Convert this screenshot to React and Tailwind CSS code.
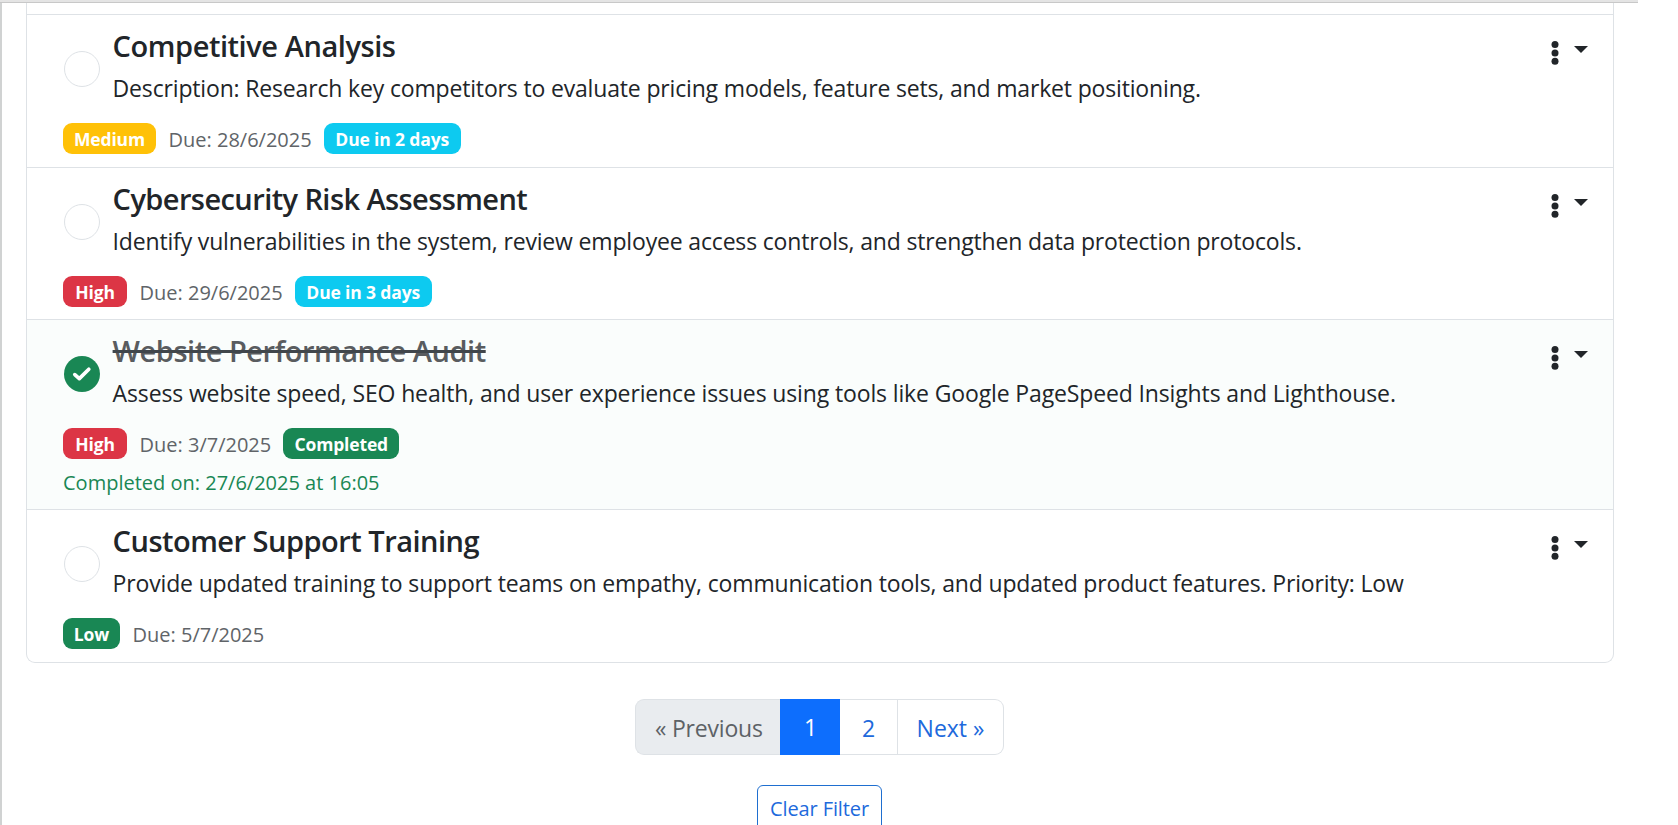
import React from "react";

const tasks = [
  {
    title: "Competitive Analysis",
    titleClass: "tracking-[-0.44px] text-[#212529]",
    description:
      "Description: Research key competitors to evaluate pricing models, feature sets, and market positioning.",
    descriptionClass: "tracking-[-0.165px]",
    rowClass: "h-[153px] border-b",
    priority: "Medium",
    priorityClass: "bg-[#ffc107] w-[93px]",
    due: "Due: 28/6/2025",
    status: "Due in 2 days",
    statusClass: "bg-[#0dcaf0] w-[137px]",
  },
  {
    title: "Cybersecurity Risk Assessment",
    titleClass: "tracking-[-0.58px] text-[#212529]",
    description:
      "Identify vulnerabilities in the system, review employee access controls, and strengthen data protection protocols.",
    descriptionClass: "tracking-[-0.168px]",
    rowClass: "h-[152px] border-b",
    priority: "High",
    priorityClass: "bg-[#dc3545] w-[64px]",
    due: "Due: 29/6/2025",
    status: "Due in 3 days",
    statusClass: "bg-[#0dcaf0] w-[137px]",
  },
  {
    title: "Website Performance Audit",
    titleClass: "tracking-[-0.46px] text-[#595c5f]",
    description:
      "Assess website speed, SEO health, and user experience issues using tools like Google PageSpeed Insights and Lighthouse.",
    descriptionClass: "tracking-[-0.135px]",
    rowClass: "h-[190px] border-b bg-[#fafdfc]",
    priority: "High",
    priorityClass: "bg-[#dc3545] w-[64px]",
    due: "Due: 3/7/2025",
    status: "Completed",
    statusClass: "bg-[#198754] w-[116px]",
    completedOn: "Completed on: 27/6/2025 at 16:05",
    done: true,
  },
  {
    title: "Customer Support Training",
    titleClass: "tracking-[-0.5px] text-[#212529]",
    description:
      "Provide updated training to support teams on empathy, communication tools, and updated product features. Priority: Low",
    descriptionClass: "tracking-[-0.158px]",
    rowClass: "h-[152px]",
    priority: "Low",
    priorityClass: "bg-[#198754] w-[57px]",
    due: "Due: 5/7/2025",
  },
];

function Badge({ className, children }) {
  return (
    <span
      className={`flex h-[31px] shrink-0 items-center justify-center rounded-[9px] pt-[2px] text-[17.5px] leading-[29px] font-bold tracking-[-0.15px] text-white ${className}`}
    >
      {children}
    </span>
  );
}

function Toggle({ done }) {
  if (!done) {
    return <button className="mt-[23px] size-9 shrink-0 rounded-full border border-[#dee2e6] bg-white" />;
  }
  return (
    <button className="mt-[23px] flex size-9 shrink-0 items-center justify-center rounded-full bg-[#198754]">
      <svg width="20" height="16" viewBox="0 0 20 16" fill="none">
        <path
          d="M2.8 8.6 7.3 12.6 16.8 3.3"
          stroke="white"
          strokeWidth="3.7"
          strokeLinecap="round"
          strokeLinejoin="round"
        />
      </svg>
    </button>
  );
}

function Menu() {
  return (
    <button className="mt-[13px] mr-[25px] ml-auto flex shrink-0 items-start gap-[15px]">
      <svg width="8" height="26" viewBox="0 0 8 26" fill="#212529">
        <circle cx="4" cy="3.6" r="3.5" />
        <circle cx="4" cy="12" r="3.5" />
        <circle cx="4" cy="20.3" r="3.5" />
      </svg>
      <svg className="mt-[5px]" width="14" height="7" viewBox="0 0 14 7" fill="#212529">
        <path d="M0 0H14L7 7Z" />
      </svg>
    </button>
  );
}

function TaskRow({ task }) {
  return (
    <li className={`flex flex-col border-[#dee2e6] pt-[13px] pl-9 ${task.rowClass}`}>
      <div className="flex items-start pl-px">
        <Toggle done={task.done} />
        <div className="ml-[12.6px]">
          <h5 className={`text-[29px] leading-[36px] font-semibold whitespace-nowrap ${task.titleClass}`}>
            {task.done ? <s className="decoration-[#40464b] decoration-[3px]">{task.title}</s> : task.title}
          </h5>
          <p className={`mt-[6px] text-[23px] leading-[36px] whitespace-nowrap ${task.descriptionClass}`}>
            {task.description}
          </p>
        </div>
        <Menu />
      </div>
      <div className="mt-[17px] flex items-center">
        <Badge className={task.priorityClass}>{task.priority}</Badge>
        <span className="ml-[12.5px] pt-[2px] text-[20px] leading-[29px] text-[#606468]">{task.due}</span>
        {task.status && <Badge className={`ml-3 ${task.statusClass}`}>{task.status}</Badge>}
      </div>
      {task.completedOn && (
        <div className="mt-[9px] text-[20px] leading-[30px] text-[#198754]">{task.completedOn}</div>
      )}
    </li>
  );
}

export default function App() {
  return (
    <div className="h-[825px] w-[1678px] overflow-hidden bg-white font-['Open_Sans','Noto_Sans',sans-serif] text-[#212529]">
      <div className="h-[3px] w-[1638px] border-b border-[#c8c8c8] bg-[#e4e4e4]" />
      <div className="h-[822px] w-[1638px] border-l-2 border-[#d0d2d2] pl-6">
        <ul className="w-[1588px] rounded-b-[9px] border-x border-b border-[#dee2e6]">
          <li className="h-[12px] border-b border-[#dee2e6]" />
          {tasks.map((task) => (
            <TaskRow key={task.title} task={task} />
          ))}
        </ul>
        <nav className="mt-9 ml-[609px] flex h-14 w-[369px] text-[23px] leading-14 text-[#2069dc]">
          <span className="w-[145px] rounded-l-[9px] border border-r-0 border-[#dee2e6] bg-[#e9ecef] pl-[19px] tracking-[-0.2px] text-[#5d6266]">
            « Previous
          </span>
          <span className="w-[60px] bg-[#0d6efd] pl-px text-center text-white">1</span>
          <span className="w-[58px] border-y border-r border-[#dee2e6] text-center">2</span>
          <span className="flex-1 rounded-r-[9px] border border-l-0 border-[#dee2e6] text-center">Next »</span>
        </nav>
        <button className="mt-[30px] ml-[731px] block h-12 w-[125px] rounded-md border border-[#1f6fd0] text-[20px] leading-[44px] tracking-[-0.1px] text-[#2069dc]">
          Clear Filter
        </button>
      </div>
    </div>
  );
}
